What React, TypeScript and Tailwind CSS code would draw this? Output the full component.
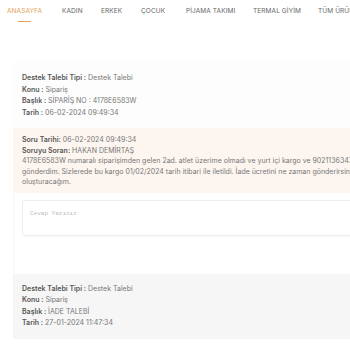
const menu = [
  { ad: 'ANASAYFA', w: 'w-[34px]' },
  { ad: 'KADIN', w: 'w-[18px]' },
  { ad: 'ERKEK', w: 'w-[19px]' },
  { ad: 'ÇOCUK', w: 'w-[24px]' },
  { ad: 'PİJAMA TAKIMI', w: 'w-[46px]' },
  { ad: 'TERMAL GİYİM', w: 'w-[44px]' },
  { ad: 'TÜM ÜRÜNLER', w: 'w-[46px]' },
];

type Talep = { tip: string; konu: string; baslik: string; tarih: string };

function TalepKart({ t, className }: { t: Talep; className: string }) {
  return (
    <div className={`pl-[9px] pb-[10px] text-[7px] leading-[11.5px] text-[#777] ${className}`}>
      <div><b className="font-semibold text-[#555]">Destek Talebi Tipi :</b> {t.tip}</div>
      <div><b className="font-semibold text-[#555]">Konu :</b> {t.konu}</div>
      <div><b className="font-semibold text-[#555]">Başlık :</b> {t.baslik}</div>
      <div><b className="font-semibold text-[#555]">Tarih :</b> {t.tarih}</div>
    </div>
  );
}

export default function App() {
  return (
    <div
      className="w-[350px] h-[350px] overflow-hidden bg-white"
      style={{ fontFamily: 'Inter, "Noto Sans", sans-serif' }}
    >
      <nav className="flex gap-[21px] pl-[7px] pt-[7px] h-[62px] whitespace-nowrap text-[6.5px] tracking-[0.1px] text-[#666]">
        {menu.map((m, i) => (
          <div key={m.ad} className={`flex flex-col items-center shrink-0 ${m.w}`}>
            <span className={`self-start ${i === 0 ? 'text-[#e2a35c]' : ''}`}>{m.ad}</span>
            {i === 0 && <span className="mt-[4px] w-[13px] h-[1px] bg-[#e2a35c]" />}
          </div>
        ))}
      </nav>

      <div className="w-[480px] pl-[13px]">
        <TalepKart
          className="bg-[#fdfdfd] pt-[10px]"
          t={{ tip: 'Destek Talebi', konu: 'Sipariş', baslik: 'SİPARİŞ NO : 4178E6583W', tarih: '06-02-2024 09:49:34' }}
        />

        <div className="bg-[#fdf6f0] pl-[9px] pt-[7px] pb-[5px] text-[7px] leading-[10.5px] text-[#777] whitespace-nowrap">
          <div><b className="font-semibold text-[#555]">Soru Tarihi:</b> 06-02-2024 09:49:34</div>
          <div><b className="font-semibold text-[#555]">Soruyu Soran:</b> HAKAN DEMİRTAŞ</div>
          <div>4178E6583W numaralı siparişimden gelen 2ad. atlet üzerime olmadı ve yurt içi kargo ve 90211363475 kargo numarası ile</div>
          <div>gönderdim. Sizlerede bu kargo 01/02/2024 tarih itibari ile iletildi. İade ücretini ne zaman gönderirsiniz, yeni sipariş</div>
          <div>oluşturacağım.</div>
        </div>

        <div className="flex h-[81px]">
          <div className="w-[2px] bg-[#fafafa]" />
          <div className="flex-1 pl-[7px] pt-[7px]">
            <div className="h-[36px] border border-[#eee] rounded-[2px] shadow-[0_1px_2px_rgba(0,0,0,0.04)] pl-[7px] pt-[8px] text-[6px] text-[#bbb] font-['Liberation_Mono',monospace]">
              Cevap Yazınız
            </div>
          </div>
        </div>

        <TalepKart
          className="bg-[#f6f6f6] pt-[9px]"
          t={{ tip: 'Destek Talebi', konu: 'Sipariş', baslik: 'İADE TALEBİ', tarih: '27-01-2024 11:47:34' }}
        />
      </div>
    </div>
  );
}
